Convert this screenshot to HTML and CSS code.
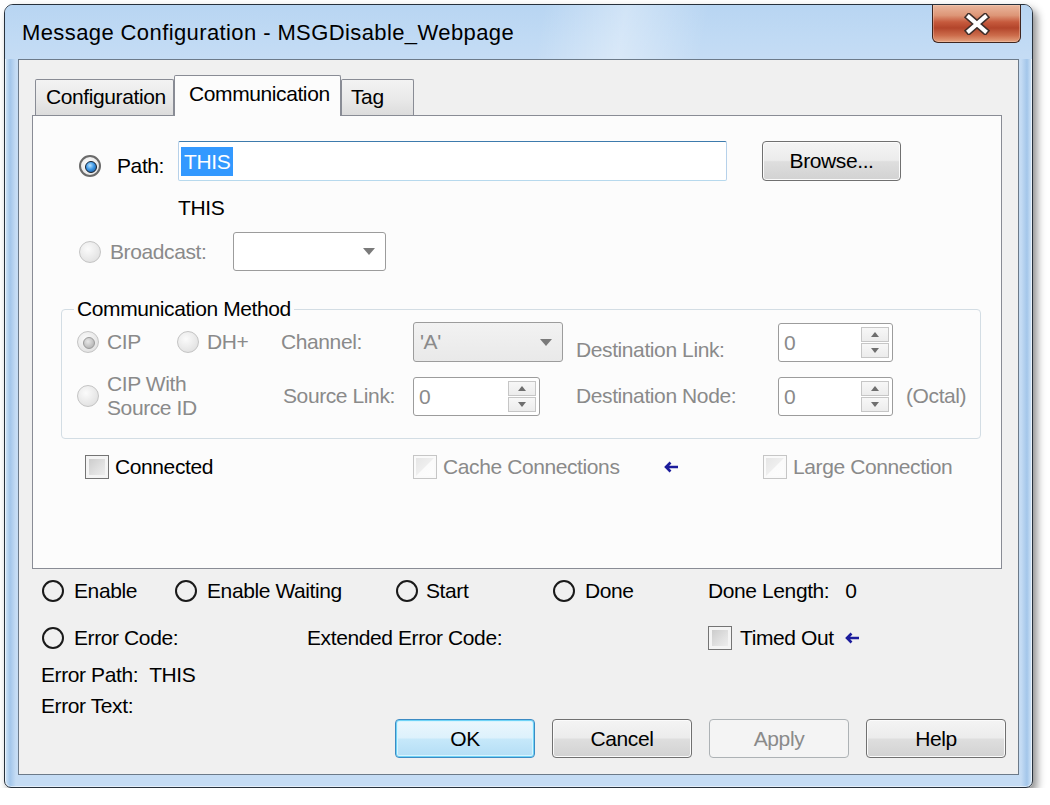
FILE: index.html
```html
<!DOCTYPE html>
<html>
<head>
<meta charset="utf-8">
<title>Message Configuration - MSGDisable_Webpage</title>
<link rel="stylesheet" href="styles.css">
</head>
<body>
<div class="window">
  <div class="titlebar">
    <div class="title">Message Configuration - MSGDisable_Webpage</div>
    <div class="close">
      <svg width="26" height="22" viewBox="0 0 26 22"><path d="M5 4 L21 18 M21 4 L5 18" stroke="#3e2e2a" stroke-width="7.2" stroke-linecap="square" fill="none"/><path d="M5 4 L21 18 M21 4 L5 18" stroke="#ffffff" stroke-width="4.2" stroke-linecap="square" fill="none"/></svg>
    </div>
  </div>
  <div class="client">
    <div class="tabs">
      <div class="tab tab-config">Configuration</div>
      <div class="tab tab-active tab-comm">Communication</div>
      <div class="tab tab-tag">Tag</div>
    </div>
    <div class="panel">
      <div class="path-row">
        <span class="radio radio-on low"></span>
        <span class="path-label low">Path:</span>
        <div class="textbox"><span class="sel">THIS</span></div>
        <div class="btn btn-browse">Browse...</div>
      </div>
      <div class="path-value">THIS</div>
      <div class="bc-row">
        <span class="radio radio-dis"></span>
        <span class="dis bc-label">Broadcast:</span>
        <div class="combo combo-bc"><span class="combo-text"></span><span class="caret"></span></div>
      </div>
      <fieldset class="group">
        <legend>Communication Method</legend>
        <div class="group-grid">
          <div class="opt g-a"><span class="radio radio-dis radio-dis-on"></span><span class="dis">CIP</span></div>
          <div class="opt g-b"><span class="radio radio-dis"></span><span class="dis">DH+</span></div>
          <div class="dis g-c">Channel:</div>
          <div class="combo combo-ch g-d"><span class="combo-text dis">'A'</span><span class="caret"></span></div>
          <div class="dis g-e dl-label">Destination Link:</div>
          <div class="spin g-f"><span class="spin-val">0</span><span class="spin-btns"><span class="spin-up"></span><span class="spin-dn"></span></span></div>

          <div class="opt g-ab"><span class="radio radio-dis"></span><span class="dis two-line">CIP With<br>Source ID</span></div>
          <div class="dis g-c sl-label">Source Link:</div>
          <div class="spin spin-sl g-d"><span class="spin-val">0</span><span class="spin-btns"><span class="spin-up"></span><span class="spin-dn"></span></span></div>
          <div class="dis g-e">Destination Node:</div>
          <div class="spin g-f"><span class="spin-val">0</span><span class="spin-btns"><span class="spin-up"></span><span class="spin-dn"></span></span></div>
          <div class="dis g-g">(Octal)</div>
        </div>
      </fieldset>
      <div class="conn-row">
        <div class="conn-item conn-a"><span class="check"></span><span class="check-label">Connected</span></div>
        <div class="conn-item conn-b"><span class="check check-dis"></span><span class="check-label dis">Cache Connections</span>
          <svg class="arrow arrow-cache" width="15" height="12" viewBox="0 0 15 12"><path d="M6.5 1.5 L2 6 L6.5 10.5 M2.5 6 H14" fill="none" stroke="#1c1c9c" stroke-width="2.6"/></svg>
        </div>
        <div class="conn-item conn-c"><span class="check check-dis"></span><span class="check-label dis">Large Connection</span></div>
      </div>
    </div>

    <div class="status">
      <div class="st s1"><span class="radio radio-plain"></span><span class="st-label">Enable</span></div>
      <div class="st s2"><span class="radio radio-plain"></span><span class="st-label">Enable Waiting</span></div>
      <div class="st s4"><span class="radio radio-plain"></span><span class="st-label st-start">Start</span></div>
      <div class="st s5"><span class="radio radio-plain"></span><span class="st-label">Done</span></div>
      <div class="st s6">Done Length:<span class="num">0</span></div>

      <div class="st r2 s1"><span class="radio radio-plain"></span><span class="st-label">Error Code:</span></div>
      <div class="st r2 s3">Extended Error Code:</div>
      <div class="st r2 s6"><span class="check"></span><span class="to-label">Timed Out</span>
        <svg class="arrow arrow-to" width="15" height="12" viewBox="0 0 15 12"><path d="M6.5 1.5 L2 6 L6.5 10.5 M2.5 6 H14" fill="none" stroke="#1c1c9c" stroke-width="2.6"/></svg>
      </div>
    </div>
    <div class="err-path">Error Path:<span class="num-path">THIS</span></div>
    <div class="err-text">Error Text:</div>

    <div class="buttons">
      <div class="btn btn-ok">OK</div>
      <div class="btn">Cancel</div>
      <div class="btn btn-disabled">Apply</div>
      <div class="btn">Help</div>
    </div>
  </div>
</div>
</body>
</html>
```

FILE: styles.css
```css
* { box-sizing: border-box; }

html, body {
  margin: 0;
  padding: 0;
  background: #ffffff;
}

body {
  font-family: "Liberation Sans", Arial, sans-serif;
  font-size: 21px;
  letter-spacing: -0.4px;
  color: #000;
}

/* ---------- window frame ---------- */
.window {
  margin: 4px 0 0 4px;
  width: 1029px;
  height: 784px;
  border: 1px solid #27313c;
  border-radius: 9px 9px 7px 7px;
  background: linear-gradient(90deg, #d3e6f8 0, #a3c6ea 5px, #c5dcf4 11px, #c5dcf4 calc(100% - 11px), #a3c6ea calc(100% - 5px), #d3e6f8 100%);
  box-shadow: 4px 5px 9px rgba(0, 0, 0, 0.45), inset 0 0 0 1px rgba(255, 255, 255, 0.55);
  display: flex;
  flex-direction: column;
}

.titlebar {
  height: 54px;
  flex: none;
  display: flex;
  align-items: flex-start;
  border-radius: 8px 8px 0 0;
  background:
    linear-gradient(100deg, rgba(255,255,255,0) 52%, rgba(255,255,255,0.35) 60%, rgba(255,255,255,0) 68%),
    linear-gradient(180deg, #b8d5f2 0%, #c0daf4 60%, #c5dcf4 100%);
}

.title {
  margin: 15px 0 0 17px;
  font-size: 22px;
  line-height: 26px;
  letter-spacing: 0.4px;
  color: #000;
}

.close {
  margin-left: auto;
  margin-right: 11px;
  width: 89px;
  height: 38px;
  border: 1px solid #3f2620;
  border-top: none;
  border-radius: 0 0 6px 6px;
  background: linear-gradient(180deg, #eab79e 0%, #dd9677 28%, #c65a3d 46%, #b3452b 62%, #cc6c4b 82%, #e4a27f 100%);
  box-shadow: inset 0 0 0 1px rgba(255, 220, 200, 0.35);
  display: flex;
  align-items: center;
  justify-content: center;
}

/* ---------- client area ---------- */
.client {
  margin: 0 13px;
  height: 716px;
  flex: none;
  border: 1px solid #6c7a89;
  background: #f0f0f0;
}

.tabs {
  display: flex;
  align-items: flex-end;
  margin: 15px 0 0 16px;
  height: 40px;
}

.tab {
  height: 36px;
  border: 1px solid #898c95;
  border-bottom: none;
  border-radius: 2px 2px 0 0;
  background: linear-gradient(180deg, #f3f3f3 0%, #e9e9e9 55%, #dcdcdc 100%);
  line-height: 34px;
  white-space: nowrap;
}

.tab-config { width: 139px; padding-left: 10px; }
.tab-comm { width: 167px; padding-left: 14px; }
.tab-tag { width: 73px; padding-left: 9px; }

.tab-active {
  height: 41px;
  margin-bottom: -1px;
  line-height: 36px;
  background: #fcfcfc;
  position: relative;
  z-index: 1;
}

.panel {
  margin: 0 16px 0 13px;
  height: 454px;
  border: 1px solid #898c95;
  background: #fcfcfc;
}

/* ---------- radios & checks ---------- */
.radio {
  display: inline-block;
  flex: none;
  width: 22px;
  height: 22px;
  border-radius: 50%;
  position: relative;
}

.radio-on {
  border: 2px solid #6a6a6a;
  background: radial-gradient(circle at 45% 40%, #ffffff 0%, #e6e6e6 70%, #cfcfcf 100%);
}
.radio-on::after {
  content: "";
  position: absolute;
  left: 4px;
  top: 4px;
  width: 10px;
  height: 10px;
  border-radius: 50%;
  border: 1.5px solid #141f2e;
  background: radial-gradient(circle at 40% 35%, #b6e2ff 0%, #3d97e6 45%, #164d8c 100%);
}

.radio-dis {
  border: 1px solid #c4c4c4;
  background: radial-gradient(circle at 40% 35%, #fbfbfb 0%, #e6e6e6 65%, #d8d8d8 100%);
}
.radio-dis-on::after {
  content: "";
  position: absolute;
  left: 5px;
  top: 5px;
  width: 10px;
  height: 10px;
  border-radius: 50%;
  border: 1.5px solid #9a9a9a;
  background: radial-gradient(circle at 40% 35%, #e8e8e8 0%, #b4b4b4 80%);
}

.radio-plain {
  width: 22px;
  height: 22px;
  border: 2px solid #1a1a1a;
  background: transparent;
}

.check {
  display: inline-block;
  flex: none;
  width: 24px;
  height: 24px;
  border: 1px solid #747474;
  background: linear-gradient(135deg, #c6c6c6 0%, #e2e2e2 60%, #f2f2f2 100%);
  box-shadow: inset 0 0 0 3px #f4f4f4;
}

.check-dis {
  border-color: #c6c6c6;
  background: linear-gradient(135deg, #e4e4e4 0%, #eeeeee 48%, #fbfbfb 52%, #fdfdfd 100%);
  box-shadow: inset 0 0 0 2px #fafafa;
}

.dis { color: #8a8a8a; }

.arrow { flex: none; display: block; }

/* ---------- path ---------- */
.path-row {
  display: flex;
  align-items: center;
  margin-top: 25px;
  padding-left: 46px;
  height: 40px;
}

.low { margin-top: 9px; }

.path-label { margin-left: 16px; line-height: 24px; }

.textbox {
  margin-left: 14px;
  width: 549px;
  height: 40px;
  border: 1px solid;
  border-color: #3d7bad #b6d1ea #b7d9ed #b6d1ea;
  border-radius: 2px;
  background: #fff;
  padding: 5px 0 0 2px;
}

.sel {
  display: inline-block;
  background: #3399ff;
  color: #fff;
  padding: 0 3px;
  line-height: 29px;
}

.btn {
  width: 140px;
  height: 39px;
  border: 1px solid #707070;
  border-radius: 4px;
  background: linear-gradient(180deg, #f4f4f4 0%, #ececec 48%, #dedede 52%, #d2d2d2 100%);
  box-shadow: inset 0 0 0 1px #fbfbfb;
  display: flex;
  align-items: center;
  justify-content: center;
  flex: none;
}

.btn-browse {
  margin-left: 35px;
  width: 139px;
  height: 40px;
}

.path-value {
  margin: 15px 0 0 145px;
  line-height: 24px;
}

.bc-row {
  display: flex;
  align-items: center;
  margin-top: 12px;
  padding-left: 46px;
  height: 39px;
}

.bc-label { margin-left: 9px; }

.combo {
  display: flex;
  align-items: center;
  height: 39px;
  border: 1px solid #9c9c9c;
  border-radius: 3px;
  background: #ffffff;
  padding: 0 10px 0 6px;
}

.combo-text { flex: 1; }

.caret {
  width: 0;
  height: 0;
  border-left: 6px solid transparent;
  border-right: 6px solid transparent;
  border-top: 7px solid #7a7a7a;
}

.combo-bc {
  margin-left: 27px;
  width: 153px;
}

.combo-ch {
  width: 150px;
  height: 40px;
  background: linear-gradient(180deg, #f2f2f2, #e9e9e9);
}

/* ---------- group box ---------- */
.group {
  margin: 27px 0 0 28px;
  width: 920px;
  padding: 2px 0 22px 15px;
  border: 1px solid #d3dde4;
  border-radius: 4px;
  min-width: 0;
}

.group legend {
  padding: 0 3px;
  margin-left: -3px;
  line-height: 22px;
}

.group-grid {
  display: grid;
  grid-template-columns: 100px 104px 132px 163px 202px 128px auto;
  grid-template-rows: 40px 40px;
  row-gap: 14px;
  align-items: center;
  line-height: 24px;
}

.opt {
  display: flex;
  align-items: center;
  gap: 8px;
}

.g-a { grid-column: 1; }
.g-b { grid-column: 2; }
.g-ab { grid-column: 1 / 3; grid-row: 2; }
.g-c { grid-column: 3; }
.g-d { grid-column: 4; }
.g-e { grid-column: 5; }
.g-f { grid-column: 6; }
.g-g { grid-column: 7; }

.dl-label { align-self: end; }
.sl-label { padding-left: 2px; }

.two-line { line-height: 24px; }

.spin {
  display: flex;
  width: 115px;
  height: 39px;
  border: 1px solid #9c9c9c;
  border-radius: 3px;
  background: #fff;
  padding: 3px 3px 3px 5px;
}

.spin-sl { width: 127px; }

.spin-val {
  flex: 1;
  color: #8a8a8a;
  line-height: 31px;
}

.spin-btns {
  width: 28px;
  display: flex;
  flex-direction: column;
  gap: 1px;
}

.spin-up, .spin-dn {
  flex: 1;
  border: 1px solid #c6c6c6;
  background: linear-gradient(180deg, #f7f7f7, #ececec);
  display: flex;
  align-items: center;
  justify-content: center;
}

.spin-up::after {
  content: "";
  border-left: 4px solid transparent;
  border-right: 4px solid transparent;
  border-bottom: 5px solid #6e6e6e;
}

.spin-dn::after {
  content: "";
  border-left: 4px solid transparent;
  border-right: 4px solid transparent;
  border-top: 5px solid #6e6e6e;
}

/* ---------- connection checkboxes ---------- */
.conn-row {
  display: flex;
  align-items: center;
  margin-top: 16px;
  padding-left: 52px;
  height: 24px;
  line-height: 24px;
}

.conn-item {
  display: flex;
  align-items: center;
}

.conn-a { width: 328px; }
.conn-b { width: 350px; }

.check-label { margin-left: 6px; }

.arrow-cache { margin-left: 45px; }

/* ---------- status area ---------- */
.status {
  display: grid;
  grid-template-columns: 133px 132px 89px 157px 155px 1fr;
  grid-template-rows: 24px 24px;
  row-gap: 23px;
  margin-top: 10px;
  padding-left: 23px;
  line-height: 24px;
}

.st {
  display: flex;
  align-items: center;
  grid-row: 1;
  white-space: nowrap;
}

.st.r2 { grid-row: 2; }

.s1 { grid-column: 1 / 3; }
.s2 { grid-column: 2 / 4; }
.s3 { grid-column: 3 / 6; }
.s4 { grid-column: 4; }
.s5 { grid-column: 5; }
.s6 { grid-column: 6; }

.st-label { margin-left: 10px; }
.st-start { margin-left: 8px; }

.num { margin-left: 16px; }

.to-label { margin-left: 8px; }
.arrow-to { margin-left: 11px; }

.err-path {
  margin: 13px 0 0 22px;
  line-height: 24px;
}

.num-path { margin-left: 11px; }

.err-text {
  margin: 7px 0 0 22px;
  line-height: 24px;
}

.buttons {
  display: flex;
  justify-content: flex-end;
  gap: 17px;
  margin-top: 1px;
  padding-right: 12px;
}

.btn-ok {
  border-color: #3c8bc3;
  background: linear-gradient(180deg, #ecf7fd 0%, #ddf1fc 48%, #c6e8fa 52%, #b3def5 100%);
  box-shadow: inset 0 0 0 1px #6fd3f7, inset 0 0 0 2px #d8f4fe;
}

.btn-disabled {
  border-color: #adb2b5;
  background: #f4f4f4;
  box-shadow: none;
  color: #8a8a8a;
}
```
